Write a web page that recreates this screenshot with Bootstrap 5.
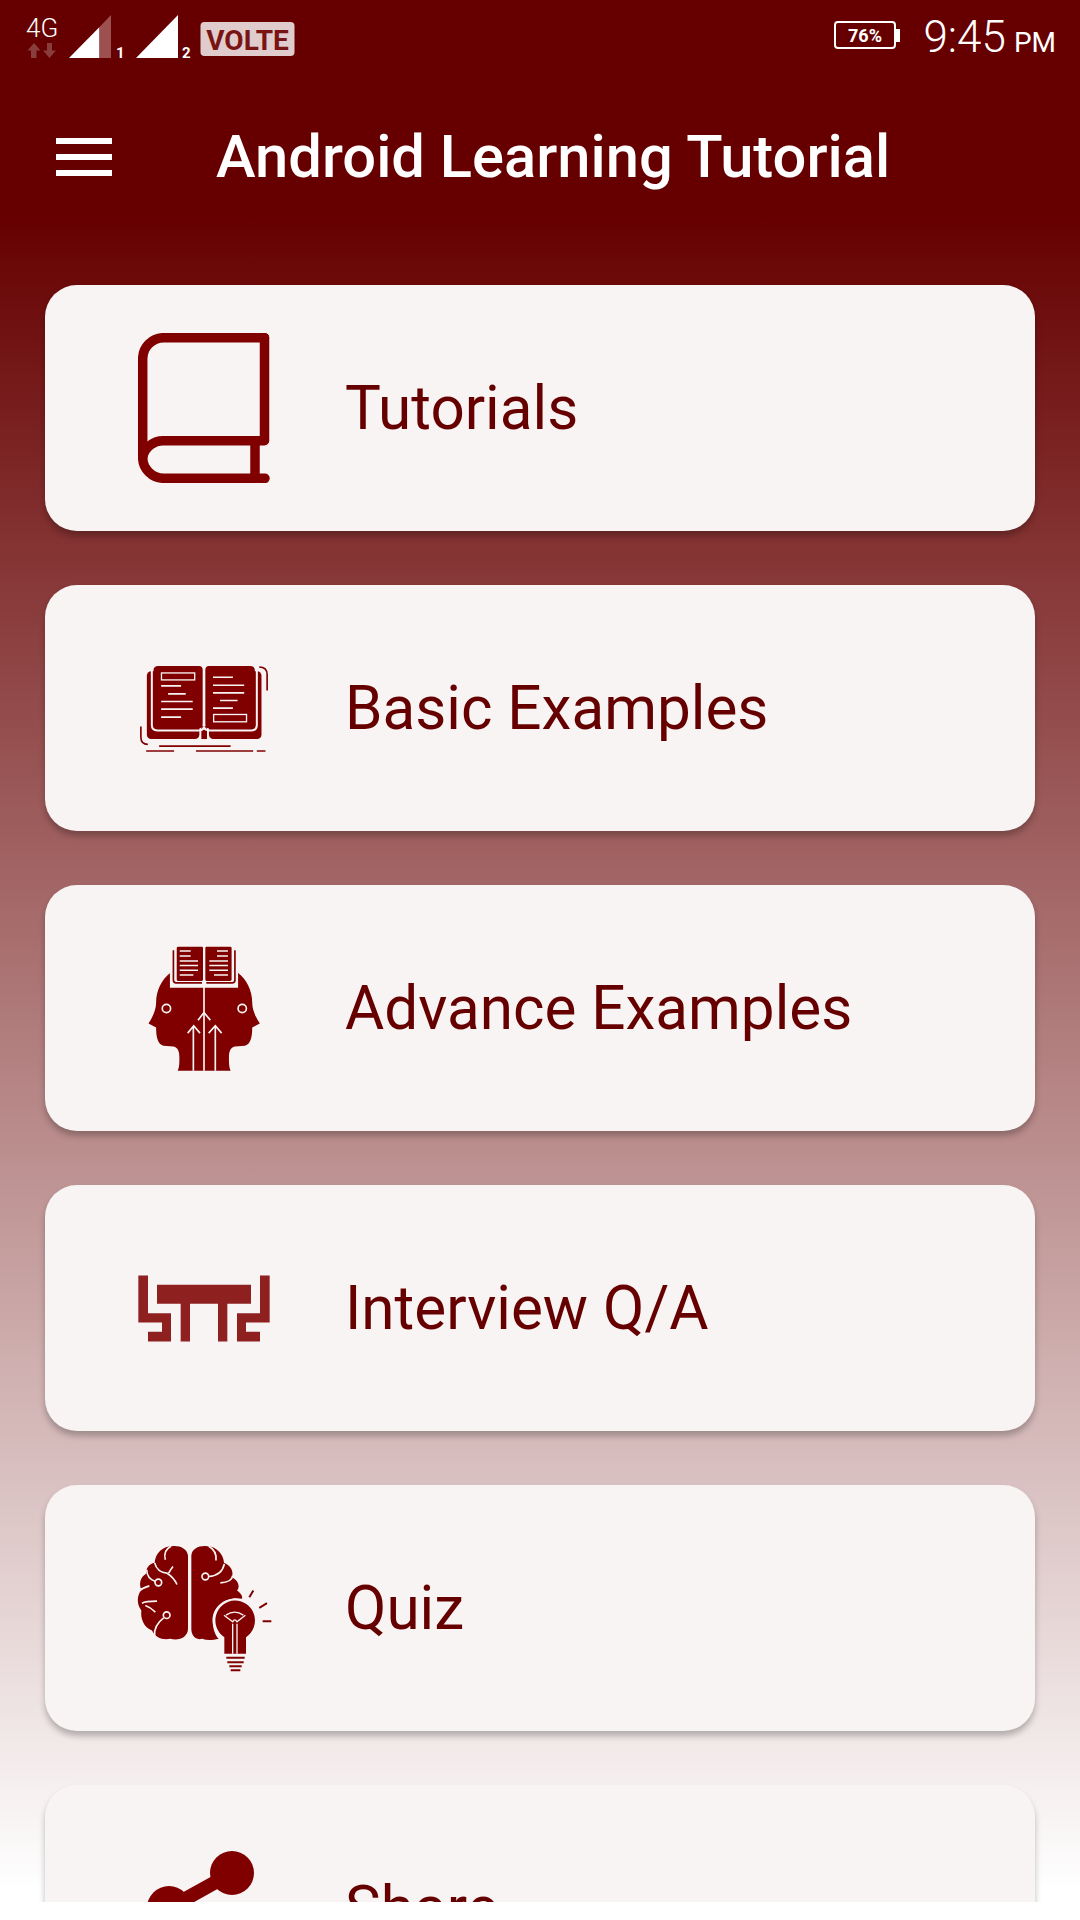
<!DOCTYPE html>
<html lang="en">
<head>
    <meta charset="UTF-8">
    <meta name="viewport" content="width=device-width, initial-scale=1.0">
    <title>Android Learning Tutorial</title>
    <link href="https://cdn.jsdelivr.net/npm/bootstrap@5.3.0/dist/css/bootstrap.min.css" rel="stylesheet">
    <style>
        body {
            background-color: #fff;
            font-family: Roboto, sans-serif;
        }
        .screen {
            height: 1902px;
            overflow: hidden;
            background: linear-gradient(#660000 215px, #fff 1890px);
        }
        .status-row {
            flex: none;
            height: 72px;
            padding: 15px 24px 0 26px;
        }
        .battery-wrap {
            margin-top: 6px;
            margin-right: 23px;
        }
        .clock {
            font-weight: 300;
            font-size: 44px;
            line-height: 44px;
            color: #fff;
        }
        .clock small {
            font-size: 28px;
            font-weight: 400;
            margin-left: 8px;
        }
        .app-bar {
            flex: none;
            height: 172px;
            padding-left: 56px;
        }
        .burger {
            width: 56px;
            height: 38px;
            margin-right: 104px;
            margin-bottom: 2px;
            border-top: 6px solid #fff;
            border-bottom: 6px solid #fff;
            position: relative;
        }
        .burger::after {
            content: "";
            position: absolute;
            left: 0;
            right: 0;
            top: 10px;
            height: 6px;
            background: #fff;
        }
        .app-title {
            font-size: 59.7px;
            font-weight: 500;
            color: #fff;
            margin: 0;
        }
        .menu-list {
            padding: 41px 45px 0;
            gap: 54px;
        }
        .menu-card {
            height: 246px;
            flex: none;
            border: 0;
            border-radius: 32px;
            background: #f9f4f4;
            box-shadow: 0 5px 6px rgba(0, 0, 0, 0.25);
        }
        .icon-slot {
            width: 180px;
            margin-left: 69px;
            margin-right: 51px;
        }
        .menu-label {
            font-size: 60.2px;
            color: #660000;
            padding-top: 3px;
        }
    </style>
</head>
<body>
    <div class="screen d-flex flex-column">
        <div class="status-row d-flex align-items-start">
            <svg width="280" height="50" viewBox="26 15 280 50">
                <text x="26" y="37" font-family="Roboto" font-weight="300" font-size="26" fill="#fff">4G</text>
                <path d="M31 58V50.500H27.500L34 43 40.500 50.500H36.500V58ZM47 43H52V50.500H56L49.500 58 43 50.500H47Z" fill="#8a3d3d"/>
                <path d="M69 58 99.500 27V58Z" fill="#fff"/>
                <path d="M99.500 27 111 15V58H99.500Z" fill="#9c5050"/>
                <text x="116" y="58" font-family="Roboto" font-weight="700" font-size="15" fill="#fff">1</text>
                <path d="M136 58 178 15V58Z" fill="#fff"/>
                <text x="182" y="58" font-family="Roboto" font-weight="700" font-size="15" fill="#fff">2</text>
                <rect x="200.500" y="22" width="94" height="34" rx="4" fill="#e0cccc"/>
                <text x="247.500" y="50" text-anchor="middle" font-family="Roboto" font-weight="700" font-size="28" fill="#7a1414">VOLTE</text>
            </svg>
            <div class="ms-auto d-flex align-items-start">
                <div class="battery-wrap">
                    <svg width="66" height="28" viewBox="0 0 66 28">
                        <rect x="1" y="1" width="60" height="26" rx="3" fill="none" stroke="#fff" stroke-width="2"/>
                        <path d="M62 8H66V21H62Z" fill="#fff"/>
                        <text x="31" y="21" text-anchor="middle" font-family="Roboto" font-weight="700" font-size="18" fill="#fff">76%</text>
                    </svg>
                </div>
                <div class="clock">9:45<small>PM</small></div>
            </div>
        </div>

        <div class="app-bar d-flex align-items-center">
            <div class="burger"></div>
            <h1 class="app-title">Android Learning Tutorial</h1>
        </div>

        <div class="menu-list d-flex flex-column">
            <div class="card menu-card flex-row align-items-center">
                <div class="icon-slot d-flex justify-content-center">
                    <svg width="132" height="150" viewBox="0 0 132 150" fill="none" stroke="#800000" stroke-width="9.500" stroke-linecap="round" stroke-linejoin="round">
                        <path d="M126.500 4.700H26A21 21 0 0 0 4.700 26V124A21 21 0 0 0 26 145.300H127"/>
                        <path d="M4.700 124A21 21 0 0 1 26 107.700H126.500V4.700"/>
                        <path d="M117 107.700V145"/>
                    </svg>
                </div>
                <span class="menu-label">Tutorials</span>
            </div>

            <div class="card menu-card flex-row align-items-center">
                <div class="icon-slot d-flex justify-content-center">
                    <svg width="150" height="103" viewBox="12 17 450 310">
                        <rect x="65" y="60" width="158" height="204" rx="13" fill="#800000"/>
                        <rect x="252" y="60" width="158" height="204" rx="13" fill="#800000"/>
                        <rect x="229" y="225" width="17" height="39" fill="#800000"/>
                        <path d="M80 44V222Q80 238 96 238H222Q236 238 237 226Q238 238 254 238H380Q396 238 396 222V44" fill="none" stroke="#f9f4f4" stroke-width="6"/>
                        <path d="M85 58Q85 44 99 44H222Q233 44 233 56V218Q233 232 222 232H99Q85 232 85 218Z" fill="#800000"/>
                        <path d="M241 56Q241 44 252 44H376Q390 44 390 58V218Q390 232 376 232H252Q241 232 241 218Z" fill="#800000"/>
                        <rect x="109" y="65" width="100" height="21" fill="none" stroke="#f9f4f4" stroke-width="4"/>
                        <rect x="266" y="190" width="99" height="22" fill="none" stroke="#f9f4f4" stroke-width="4"/>
                        <path d="M108 104H168M129 128H182M108 151H203M108 174H203M108 198H168M264 78H324M264 102H358M264 125H358M285 148H338M264 171H324" stroke="#f9f4f4" stroke-width="5"/>
                        <path d="M403 47Q427 47 427 70V118M47 226V258Q47 280 68 280" fill="none" stroke="#800000" stroke-width="5"/>
                        <path d="M102 285H317M63 300H147M213 300H385M396 300H422" stroke="#800000" stroke-width="5"/>
                    </svg>
                </div>
                <span class="menu-label">Basic Examples</span>
            </div>

            <div class="card menu-card flex-row align-items-center">
                <div class="icon-slot d-flex justify-content-center">
                    <svg width="140" height="133" viewBox="12 33 420 400">
                        <path d="M122 125C95 145 78 180 78 215 78 235 70 255 55 278L78 290C78 310 80 340 100 345L130 347C145 350 148 365 148 380 148 395 148 410 143 420H302C297 410 297 395 297 380 297 365 300 350 315 347L345 345C365 340 367 310 367 290L390 278C375 255 367 235 367 215 367 180 350 145 323 125V165H122Z" fill="#800000"/>
                        <path d="M140 51Q140 47 144 47H216Q219 47 219 51V146Q219 150 215 150H144Q140 150 140 146ZM226 51Q226 47 229 47H301Q305 47 305 51V146Q305 150 301 150H230Q226 150 226 146Z" fill="#800000"/>
                        <path d="M130 58V148Q130 156 138 156H216M315 58V148Q315 156 307 156H229" fill="none" stroke="#800000" stroke-width="5"/>
                        <path d="M122 125V168H322V125M222 150V420" fill="none" stroke="#f9f4f4" stroke-width="5"/>
                        <path d="M149 60H182M149 75H182M149 90H204M149 104H204M149 118H204M149 132H190M261 60H294M261 75H294M238 90H294M238 104H294M238 118H294M252 132H294" stroke="#f9f4f4" stroke-width="4.500"/>
                        <path d="M190 420V285M256 420V285M173 307 191 285 210 307M236 307 256 285 275 307M204 268 222 245 241 268" fill="none" stroke="#f9f4f4" stroke-width="5"/>
                        <circle cx="109" cy="233" r="12.500" fill="none" stroke="#f9f4f4" stroke-width="5"/>
                        <circle cx="337" cy="233" r="12.500" fill="none" stroke="#f9f4f4" stroke-width="5"/>
                    </svg>
                </div>
                <span class="menu-label">Advance Examples</span>
            </div>

            <div class="card menu-card flex-row align-items-center">
                <div class="icon-slot d-flex justify-content-center">
                    <svg width="138" height="73" viewBox="30 35 414 218" fill="#8f2020">
                        <path d="M96 73H378V130H307V243H279V130H195V243H167V130H96Z"/>
                        <path d="M40 45H69V158H138V243H69V214H111V186H40Z"/>
                        <path d="M434 45H405V158H336V243H405V214H363V186H434Z"/>
                    </svg>
                </div>
                <span class="menu-label">Interview Q/A</span>
            </div>

            <div class="card menu-card flex-row align-items-center">
                <div class="icon-slot d-flex justify-content-center">
                    <svg width="140" height="133" viewBox="26 35 420 398">
                        <path d="M188 75C185 55 165 45 140 47 115 47 90 65 88 97 70 100 62 115 62 130 45 140 40 160 48 178 35 195 33 220 48 240 45 265 55 290 80 300 90 320 110 330 135 325 160 333 188 320 188 295Z" fill="#800000"/>
                        <path d="M198 75C200 55 220 45 245 47 272 47 295 70 296 97 318 105 325 125 320 140 340 150 345 170 335 180 350 190 352 200 350 205 310 195 260 225 262 270 262 295 270 315 280 325 260 330 245 330 230 325 210 330 198 315 198 295Z" fill="#800000"/>
                        <path d="M137 47Q112 60 120 88M88 97Q95 125 125 128Q145 140 155 162M143 108Q135 118 130 128M64 118Q65 145 90 153M34 186Q50 172 72 166M50 218Q60 212 95 212M60 225Q75 230 90 245M88 315Q85 285 115 262M250 47Q275 60 272 90M250 138Q290 135 297 100M285 157Q320 155 322 135" fill="none" stroke="#f9f4f4" stroke-width="5"/>
                        <circle cx="99" cy="156" r="10" fill="#800000" stroke="#f9f4f4" stroke-width="5"/>
                        <circle cx="124" cy="254" r="10" fill="#800000" stroke="#f9f4f4" stroke-width="5"/>
                        <circle cx="240" cy="138" r="10" fill="#800000" stroke="#f9f4f4" stroke-width="5"/>
                        <circle cx="328" cy="270" r="66" fill="#f9f4f4"/>
                        <path d="M328 210A60 60 0 0 1 362 320V370H297V320A60 60 0 0 1 328 210Z" fill="#800000"/>
                        <path d="M322 280V370M335 280V370M296 254 322 274Q328 262 335 274L360 254M302 254Q328 236 354 254" fill="none" stroke="#f9f4f4" stroke-width="4"/>
                        <path d="M303 382H358M306 395H355M312 407H349M316 419H345" stroke="#800000" stroke-width="6"/>
                        <path d="M372 200 384 180M402 232 425 218M412 272H438" stroke="#800000" stroke-width="6"/>
                    </svg>
                </div>
                <span class="menu-label">Quiz</span>
            </div>

            <div class="card menu-card flex-row align-items-center">
                <div class="icon-slot d-flex justify-content-center">
                    <svg width="120" height="120" viewBox="0 0 120 120" fill="#800000">
                        <circle cx="88" cy="25" r="22"/>
                        <circle cx="25" cy="60" r="22"/>
                        <circle cx="88" cy="95" r="22"/>
                        <path d="M88 25 25 60 88 95" fill="none" stroke="#800000" stroke-width="14"/>
                    </svg>
                </div>
                <span class="menu-label">Share</span>
            </div>
        </div>
    </div>

    <script src="https://cdn.jsdelivr.net/npm/bootstrap@5.3.0/dist/js/bootstrap.bundle.min.js"></script>
</body>
</html>
